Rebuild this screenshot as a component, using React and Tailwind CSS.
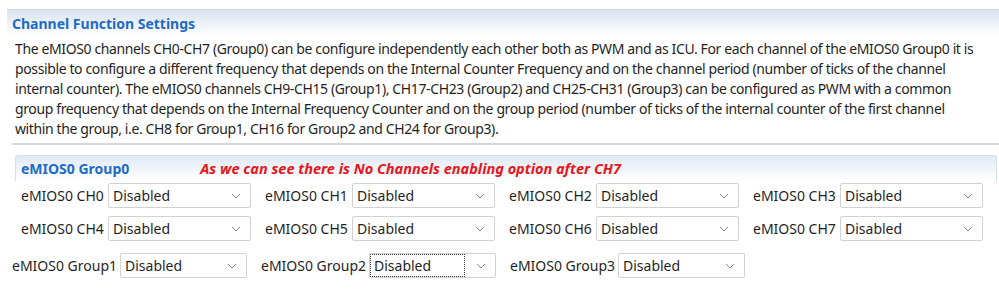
import React from "react";

const Chevron = () => (
  <svg width="10" height="6" viewBox="0 0 10 6" className="shrink-0">
    <path d="M1 1 L5 5 L9 1" fill="none" stroke="#8a8a8a" strokeWidth="1" />
  </svg>
);

const Select = ({ width, focused }) => (
  <div
    className={`h-[25px] ${width} border border-[#d2d2d2] rounded-[2px] bg-white flex items-center pl-[1px] pr-[9px] shrink-0`}
  >
    <div
      className={`flex-1 h-[21px] flex items-center pl-[3px] ${
        focused ? "outline outline-1 outline-dotted outline-[#333]" : ""
      }`}
    >
      Disabled
    </div>
    <div className="w-[22px] flex justify-end">
      <Chevron />
    </div>
  </div>
);

const channelRows = [
  ["CH0", "CH1", "CH2", "CH3"],
  ["CH4", "CH5", "CH6", "CH7"],
];

const App = () => {
  return (
    <div className="w-[999px] h-[290px] bg-white overflow-hidden font-['Noto_Sans','Open_Sans',sans-serif] text-[14px] text-[#1f1f1f]">
      {/* section header */}
      <div className="pt-[9px] pl-[7px]">
        <div className="h-[27px] border-t border-[#d3d9e1] bg-linear-to-b from-[#d9e3ef] to-white flex items-center pl-[5px] font-bold text-[#1d6cc6]">
          Channel Function Settings
        </div>
      </div>

      <p className="pl-[15px] pt-[3px] text-[14px] leading-[20px] tracking-[-0.38px] whitespace-nowrap">
        The eMIOS0 channels CH0-CH7 (Group0) can be configure independently each other both as PWM and as ICU. For each channel of the eMIOS0 Group0 it is
        <br />
        possible to configure a different frequency that depends on the Internal Counter Frequency and on the channel period (number of ticks of the channel
        <br />
        internal counter). The eMIOS0 channels CH9-CH15 (Group1), CH17-CH23 (Group2) and CH25-CH31 (Group3) can be configured as PWM with a common
        <br />
        group frequency that depends on the Internal Frequency Counter and on the group period (number of ticks of the internal counter of the first channel
        <br />
        within the group, i.e. CH8 for Group1, CH16 for Group2 and CH24 for Group3).
      </p>

      <div className="ml-[12px] mt-[4px] h-[2px] bg-[#d6d6d6]" />

      {/* Group0 box */}
      <div className="ml-[15px] mr-[2px] mt-[10px]">
        <div className="h-[26px] border-t border-l border-r border-[#d6dfea] rounded-t-[3px] bg-linear-to-b from-[#e0e9f4] to-white flex items-center pl-[5px]">
          <span className="font-bold text-[#1d6cc6]">eMIOS0 Group0</span>
          <span className="ml-[71px] text-[14.5px] font-bold italic text-[#e8161b]">
            As we can see there is No Channels enabling option after CH7
          </span>
        </div>
        <div className="pl-[6px] pt-[2px] flex flex-col gap-[8px]">
          {channelRows.map((row, i) => (
            <div key={i} className="flex">
              {row.map((ch) => (
                <div key={ch} className="w-[244px] flex items-center">
                  <span className="w-[87px]">eMIOS0 {ch}</span>
                  <Select width="w-[143px]" />
                </div>
              ))}
            </div>
          ))}
        </div>
      </div>

      {/* group frequency row */}
      <div className="flex pl-[12px] mt-[12px]">
        {["Group1", "Group2", "Group3"].map((g) => (
          <div key={g} className="w-[249px] flex items-center">
            <span className="w-[108px]">eMIOS0 {g}</span>
            <Select width="w-[127px]" focused={g === "Group2"} />
          </div>
        ))}
      </div>
    </div>
  );
};

export default App;
